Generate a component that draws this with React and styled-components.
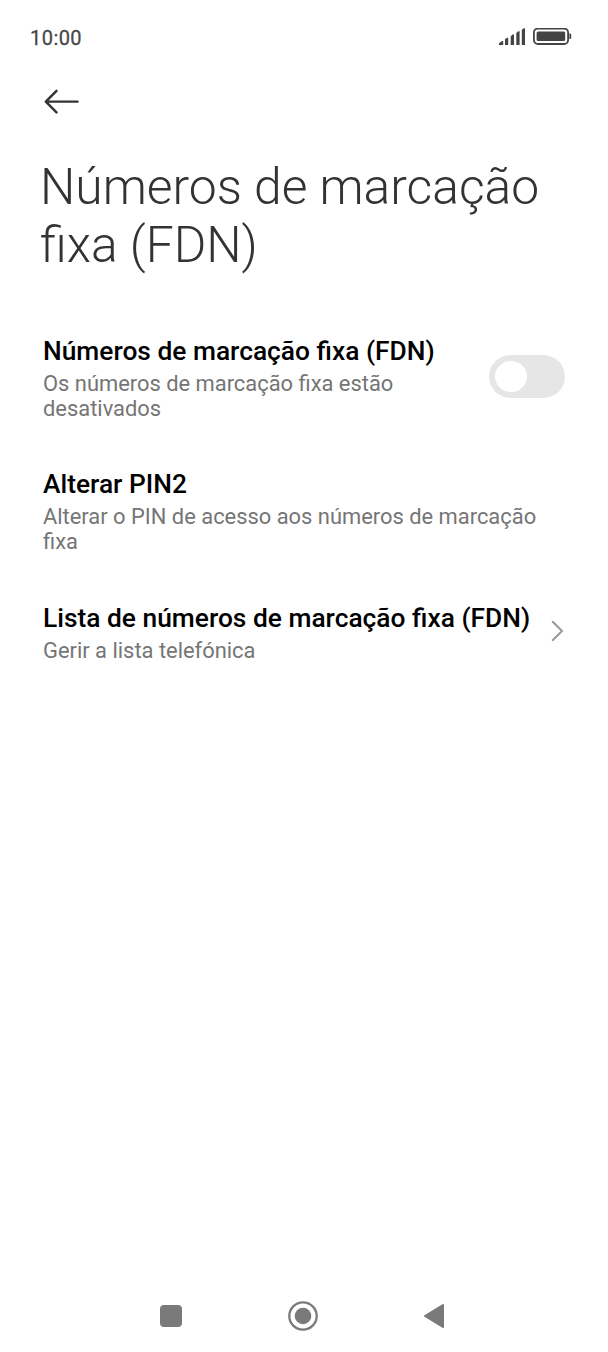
import React, { useState } from 'react';
import styled, { createGlobalStyle } from 'styled-components';

const GlobalStyle = createGlobalStyle`
  * {
    box-sizing: border-box;
  }
  body {
    margin: 0;
    background: #fff;
    font-family: Roboto, sans-serif;
  }
  button {
    display: block;
    padding: 0;
    border: 0;
    background: none;
  }
  svg {
    display: block;
    flex: none;
  }
`;

const Screen = styled.div`
  display: flex;
  flex-direction: column;
  width: 608px;
  height: 1352px;
  overflow: hidden;
`;

const StatusBar = styled.div`
  display: flex;
  align-items: center;
  justify-content: space-between;
  height: 74px;
  padding: 0 36px 0 30px;
`;

const Clock = styled.div`
  padding-top: 2px;
  color: #484848;
  font-size: 20px;
  font-weight: 400;
  line-height: 24px;
  letter-spacing: 0.45px;
  -webkit-text-stroke: 0.3px #484848;
`;

const StatusIcons = styled.div`
  display: flex;
  align-items: center;
  gap: 7px;
`;

const Header = styled.header`
  padding: 14px 40px 0;
`;

const BackButton = styled.button`
  margin-left: 4px;
`;

const Title = styled.h1`
  margin: 44px 0 0;
  color: #333;
  font-size: 49.75px;
  font-weight: 300;
  line-height: 58px;
`;

const List = styled.div`
  display: flex;
  flex-direction: column;
  gap: 47.2px;
  padding: 60.6px 43px 0;
`;

const Row = styled.div`
  display: flex;
  align-items: center;
  justify-content: space-between;
`;

const RowText = styled.div`
  width: ${props => props.$width || 'auto'};
`;

const RowTitle = styled.div`
  color: #000;
  font-size: 26.35px;
  font-weight: 500;
  line-height: 33px;
  white-space: nowrap;
`;

const RowSummary = styled.div`
  margin-top: 3.3px;
  color: #757575;
  font-size: 21.9px;
  line-height: 25px;
`;

const Toggle = styled.button`
  display: flex;
  align-items: center;
  justify-content: ${props => (props.$on ? 'flex-end' : 'flex-start')};
  width: 76px;
  height: 43px;
  margin-bottom: 2px;
  padding: 0 6px;
  border-radius: 22px;
  background: ${props => (props.$on ? '#0d84ff' : '#e6e6e6')};
`;

const Knob = styled.span`
  width: 32px;
  height: 31px;
  border-radius: 50%;
  background: #fff;
`;

const RowArrow = styled.svg`
  margin-bottom: 2px;
`;

const NavBar = styled.nav`
  display: flex;
  align-items: center;
  justify-content: space-between;
  height: 72px;
  margin-top: auto;
  padding: 0 163px 0 160px;
`;

function App () {
  const [fdnOn, setFdnOn] = useState(false);

  return (
    <Screen>
      <GlobalStyle />
      <StatusBar>
        <Clock>10:00</Clock>
        <StatusIcons>
          <svg width='27' height='18' viewBox='0 0 27 18' fill='#444'>
            <path d='M0 17 V15.2 L3 13 H4.2 V17 Z' />
            <path d='M6 17 V11.2 L8 9.8 H9.2 V17 Z' />
            <path d='M11.7 17 V8.2 L13.7 6.6 H15 V17 Z' />
            <path d='M17.3 17 V4.9 L19.3 3.3 H20.6 V17 Z' />
            <path d='M22.8 17 V1.8 L24.8 0.2 H26 V17 Z' />
          </svg>
          <svg width='39' height='18' viewBox='0 0 39 18' fill='#444'>
            <rect x='0.9' y='0.5' width='34.2' height='15.5' rx='4' fill='none' stroke='#444' strokeWidth='1.8' />
            <rect x='3.6' y='3.5' width='28.6' height='9.5' rx='1.6' />
            <path d='M36.4 5.5 H37 Q38.2 5.5 38.2 6.7 V9.8 Q38.2 11 37 11 H36.4 Z' />
          </svg>
        </StatusIcons>
      </StatusBar>
      <Header>
        <BackButton aria-label='Voltar'>
          <svg width='36' height='26' viewBox='0 0 36 26' fill='none' stroke='#333' strokeWidth='2.4' strokeLinecap='round' strokeLinejoin='round'>
            <path d='M12.5 2.8 L1.8 13.6 L12.5 24.4 M2 13.6 H33.6' />
          </svg>
        </BackButton>
        <Title>Números de marcação<br />fixa (FDN)</Title>
      </Header>
      <List>
        <Row>
          <RowText $width='400px'>
            <RowTitle>Números de marcação fixa (FDN)</RowTitle>
            <RowSummary>Os números de marcação fixa estão desativados</RowSummary>
          </RowText>
          <Toggle $on={fdnOn} onClick={() => setFdnOn(!fdnOn)} role='switch' aria-checked={fdnOn}>
            <Knob />
          </Toggle>
        </Row>
        <Row>
          <RowText>
            <RowTitle>Alterar PIN2</RowTitle>
            <RowSummary>Alterar o PIN de acesso aos números de marcação fixa</RowSummary>
          </RowText>
        </Row>
        <Row>
          <RowText>
            <RowTitle>Lista de números de marcação fixa (FDN)</RowTitle>
            <RowSummary>Gerir a lista telefónica</RowSummary>
          </RowText>
          <RowArrow width='14' height='22' viewBox='0 0 14 22' fill='none' stroke='#999' strokeWidth='2'>
            <path d='M1.2 1.2 L11 11 L1.2 20.8' />
          </RowArrow>
        </Row>
      </List>
      <NavBar>
        <svg width='22' height='22' viewBox='0 0 22 22' fill='#7a7a7a'>
          <rect width='22' height='22' rx='4' />
        </svg>
        <svg width='30' height='30' viewBox='0 0 30 30' fill='#7a7a7a'>
          <circle cx='15' cy='15' r='13.7' fill='none' stroke='#7a7a7a' strokeWidth='2.3' />
          <circle cx='15' cy='15' r='8.3' />
        </svg>
        <svg width='22' height='26' viewBox='0 0 22 26' fill='#7a7a7a'>
          <path d='M19.4 1.2 Q21 0.3 21 2 V24 Q21 25.7 19.4 24.8 L1.4 13.8 Q0.2 13 1.4 12.2 Z' />
        </svg>
      </NavBar>
    </Screen>
  );
}

export default App;
